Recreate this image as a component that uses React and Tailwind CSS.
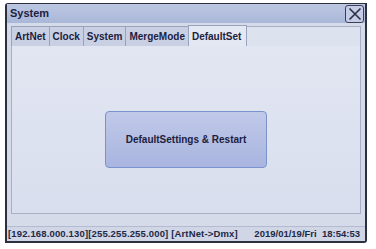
import React from 'react';

const tabs = ['ArtNet', 'Clock', 'System', 'MergeMode', 'DefaultSet'];

function App() {
    const active = 'DefaultSet';
    return (
        <div className="w-[376px] h-[249px] bg-white pt-[3px] pl-[5px] font-['Liberation_Sans',Arial,sans-serif] text-[#1c2140]">
            <div className="w-[362px] h-[240px] bg-[#2c2f3e] rounded-tl-[3px] rounded-br-[3px] pt-[1px] pl-[2px] pr-[2px] pb-[2px]">
                <div className="h-full flex flex-col bg-[#d6dbe9]">
                    {/* title bar */}
                    <div className="h-[19px] flex items-center justify-between bg-gradient-to-b from-[#bcc7e2] to-[#a9b7d8] pl-[3px]">
                        <span className="text-[11px] font-bold">System</span>
                        <div className="w-[19px] h-[18px] mr-[1px] border border-[#3a3f55] rounded-[3px] bg-[#c5cde6] flex items-center justify-center">
                            <svg width="14" height="14" viewBox="0 0 14 14">
                                <path d="M1.5 1.5 L12.5 12.5 M12.5 1.5 L1.5 12.5" stroke="#2a2e44" strokeWidth="1.6" />
                            </svg>
                        </div>
                    </div>
                    {/* body */}
                    <div className="flex-1 flex flex-col px-[4px] pt-[3px]">
                        <div className="flex h-[20px] items-end">
                            {tabs.map((t) => (
                                <div
                                    key={t}
                                    className={`h-[20px] px-[3px] flex items-center text-[10px] font-bold border border-b-0 border-[#9aa3bd] -ml-[1px] first:ml-0 ${t === active ? 'bg-[#e4e8f3] h-[21px] pr-[5px]' : 'bg-[#c9d0e4]'}`}
                                >
                                    {t}
                                </div>
                            ))}
                            <div className="flex-1 h-[20px] border-t border-r border-[#a8b0c8] bg-[#dde2ef]"></div>
                        </div>
                        <div className="h-[168px] bg-gradient-to-b from-[#e2e6f2] to-[#d9deee] border border-t-0 border-[#a8b0c8] flex items-center justify-center">
                            <div className="mt-[19px] w-[162px] h-[57px] rounded-[4px] border-[1.5px] border-[#7a93cc] bg-gradient-to-b from-[#c0c9e8] to-[#a9b5e0] flex items-center justify-center">
                                <span className="text-[10px] font-bold">DefaultSettings &amp; Restart</span>
                            </div>
                        </div>
                        <div className="flex-1"></div>
                    </div>
                    {/* status bar */}
                    <div className="h-[15px] flex items-center justify-between bg-[#d0d6e6] border-t border-[#b4bbd0] pl-[1px] pr-[5px] text-[9.5px] font-bold text-[#222845]">
                        <span className="tracking-[0.15px]">[192.168.000.130][255.255.255.000] [ArtNet-&gt;Dmx]</span>
                        <span>2019/01/19/Fri&nbsp;&nbsp;18:54:53</span>
                    </div>
                </div>
            </div>
        </div>
    );
}

export default App;
